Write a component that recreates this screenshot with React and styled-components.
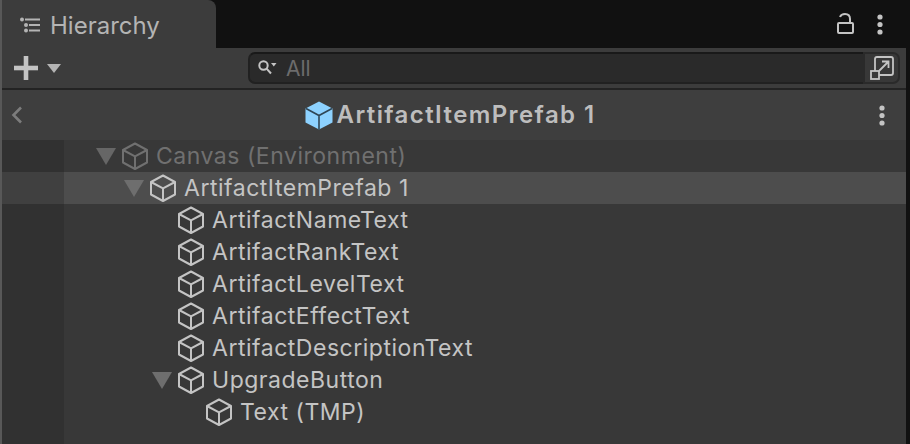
import styled, { createGlobalStyle } from "styled-components";

const GlobalStyle = createGlobalStyle`
  html, body {
    margin: 0;
    padding: 0;
    background: #111111;
  }
  * {
    box-sizing: border-box;
  }
`;

const items = [
  { name: "Canvas (Environment)", depth: 0, open: true, dim: true },
  { name: "ArtifactItemPrefab 1", depth: 1, open: true, selected: true },
  { name: "ArtifactNameText", depth: 2 },
  { name: "ArtifactRankText", depth: 2 },
  { name: "ArtifactLevelText", depth: 2 },
  { name: "ArtifactEffectText", depth: 2 },
  { name: "ArtifactDescriptionText", depth: 2 },
  { name: "UpgradeButton", depth: 2, open: true },
  { name: "Text (TMP)", depth: 3 },
];

const ListIcon = () => (
  <svg width="20" height="16" viewBox="0 0 20 16" fill="#b4b4b4">
    <circle cx="2" cy="2.5" r="2" />
    <circle cx="6" cy="8" r="2" />
    <circle cx="6" cy="13.5" r="2" />
    <rect x="5" y="1.5" width="15" height="2" />
    <rect x="9" y="7" width="11" height="2" />
    <rect x="9" y="12.5" width="11" height="2" />
  </svg>
);

const LockIcon = () => (
  <svg width="18" height="22" viewBox="0 0 18 22" fill="none" stroke="#c4c4c4" strokeWidth="2">
    <path d="M3 4 C4 1.5 6 1 8 1 C11 1 13 3 13 6 V10" />
    <rect x="1" y="10" width="15" height="10" rx="1" />
  </svg>
);

const DotsIcon = () => (
  <svg width="6" height="21" viewBox="0 0 6 21" fill="#c4c4c4">
    <circle cx="3" cy="3" r="2.6" />
    <circle cx="3" cy="10.5" r="2.6" />
    <circle cx="3" cy="18" r="2.6" />
  </svg>
);

const PlusIcon = () => (
  <svg width="24" height="24" viewBox="0 0 24 24" fill="#c4c4c4">
    <rect x="9.7" y="0" width="4.6" height="24" />
    <rect x="0" y="9.7" width="24" height="4.6" />
  </svg>
);

const SearchIcon = () => (
  <svg width="20" height="16" viewBox="0 0 20 16" fill="none" stroke="#c4c4c4" strokeWidth="2">
    <circle cx="5.5" cy="5.5" r="4.2" />
    <path d="M8.6 8.6 L13 13.5" />
    <path d="M13 3 H18.5 L15.8 6.4 Z" fill="#c4c4c4" stroke="none" />
  </svg>
);

const ExpandIcon = () => (
  <svg width="24" height="24" viewBox="0 0 24 24" fill="none" stroke="#c4c4c4" strokeWidth="1.8">
    <path d="M5 15 V3 Q5 1 7 1 H21 Q23 1 23 3 V17 Q23 19 21 19 H9" />
    <rect x="1" y="15" width="8" height="8" />
    <path d="M9 15 L18 6 M12 5.5 H18.5 V12" />
  </svg>
);

const CubeIcon = () => (
  <svg width="28" height="28" viewBox="0 0 28 28" fill="none" stroke="currentColor" strokeWidth="2" strokeLinejoin="round">
    <path d="M14 1.5 L26 8 V20.5 L14 27 L2 20.5 V8 Z" />
    <path d="M2 8 L14 14.4 L26 8 M14 14.4 V27" />
  </svg>
);

const BlueCube = () => (
  <svg width="28" height="29" viewBox="0 0 28 29">
    <path d="M14 0.5 L27.5 7.5 V21.5 L14 28.5 L0.5 21.5 V7.5 Z" fill="#8dd2ff" />
    <path d="M1 7.5 L14 14.5 L27 7.5 M14 14.5 V28.5" fill="none" stroke="#2f4656" strokeWidth="1.6" />
  </svg>
);

const BackIcon = () => (
  <svg width="12" height="18" viewBox="0 0 12 18" fill="none" stroke="#7c7c7c" strokeWidth="2.6">
    <path d="M10 1.5 L2.5 9 L10 16.5" />
  </svg>
);

const Window = styled.div`
  width: 910px;
  height: 444px;
  overflow: hidden;
  background: #111111;
  padding-right: 4px;
  font-family: Inter, "Noto Sans", sans-serif;
`;

const Frame = styled.div`
  height: 100%;
  display: flex;
  flex-direction: column;
  border-left: 2px solid #585858;
`;

const TopBar = styled.div`
  height: 48px;
  display: flex;
  align-items: stretch;
  justify-content: space-between;
  flex-shrink: 0;
`;

const Tab = styled.div`
  width: 214px;
  display: flex;
  align-items: center;
  gap: 10px;
  padding: 2px 0 0 18px;
  background: #3c3c3c;
  border-top-right-radius: 8px;
  color: #b4b4b4;
  font-size: 24px;
`;

const TopActions = styled.div`
  display: flex;
  align-items: center;
  gap: 22px;
  padding: 0 23px 0 0;
`;

const Toolbar = styled.div`
  height: 42px;
  flex-shrink: 0;
  display: flex;
  align-items: center;
  padding: 0 6px 0 12px;
  background: #3c3c3c;
  border-bottom: 2px solid #232323;
`;

const AddButton = styled.div`
  width: 234px;
  display: flex;
  align-items: center;
  gap: 9px;
`;

const Caret = styled.span`
  display: block;
  flex-shrink: 0;
  width: 0;
  height: 0;
  border-left: ${(p) => p.$width / 2}px solid transparent;
  border-right: ${(p) => p.$width / 2}px solid transparent;
  border-top: ${(p) => p.$height}px solid ${(p) => p.$color};
`;

const SearchField = styled.div`
  flex: 1;
  height: 32px;
  display: flex;
  align-items: center;
  gap: 8px;
  padding-left: 8px;
  background: #2a2a2a;
  border-top: 2px solid #191919;
  border-bottom: 2px solid #212121;
  border-left: 2px solid #212121;
  border-radius: 7px 0 0 7px;
  color: #6c6c6c;
  font-size: 21px;
`;

const SearchButton = styled.div`
  width: 37px;
  height: 32px;
  display: flex;
  align-items: center;
  justify-content: center;
  background: #383838;
  border: 2px solid #2a2a2a;
  border-radius: 0 7px 7px 0;
`;

const Breadcrumb = styled.div`
  height: 50px;
  flex-shrink: 0;
  display: flex;
  align-items: center;
  justify-content: space-between;
  padding: 0 21px 0 9px;
  background: #3e3e3e;
`;

const PrefabTitle = styled.div`
  display: flex;
  align-items: center;
  gap: 4px;
  margin-left: -2px;
  color: #bdbdbd;
  font-size: 24px;
  font-weight: 600;
  letter-spacing: 1.4px;
`;

const PrefabName = styled.span`
  padding-bottom: 2px;
`;

const Tree = styled.div`
  flex: 1;
  background: linear-gradient(to right, #313131 62px, #383838 62px);
`;

const Row = styled.div`
  height: 32px;
  display: flex;
  align-items: center;
  padding-left: ${(p) => 94 + p.$depth * 28}px;
  background: ${(p) =>
    p.$selected ? "linear-gradient(to right, #404040 62px, #4d4d4d 62px)" : "transparent"};
  color: ${(p) => (p.$dim ? "#707070" : "#c4c4c4")};
  font-size: 23px;
  letter-spacing: 0.52px;
  white-space: nowrap;
`;

const RowLabel = styled.span`
  padding-bottom: 1px;
`;

const ArrowSlot = styled.span`
  width: 25px;
  display: flex;
  align-items: center;
  flex-shrink: 0;
`;

const RowIcon = styled.span`
  display: flex;
  width: 28px;
  margin-right: 7px;
`;

const TreeRow = ({ item }) => (
  <Row $depth={item.depth} $selected={item.selected} $dim={item.dim}>
    <ArrowSlot>
      {item.open && <Caret $width={20} $height={17} $color={item.dim ? "#666666" : "#6e6e6e"} />}
    </ArrowSlot>
    <RowIcon>
      <CubeIcon />
    </RowIcon>
    <RowLabel>{item.name}</RowLabel>
  </Row>
);

const App = () => {
  return (
    <>
      <GlobalStyle />
      <Window>
        <Frame>
          <TopBar>
            <Tab>
              <ListIcon />
              Hierarchy
            </Tab>
            <TopActions>
              <LockIcon />
              <DotsIcon />
            </TopActions>
          </TopBar>
          <Toolbar>
            <AddButton>
              <PlusIcon />
              <Caret $width={15} $height={9} $color="#b4b4b4" />
            </AddButton>
            <SearchField>
              <SearchIcon />
              All
            </SearchField>
            <SearchButton>
              <ExpandIcon />
            </SearchButton>
          </Toolbar>
          <Breadcrumb>
            <BackIcon />
            <PrefabTitle>
              <BlueCube />
              <PrefabName>ArtifactItemPrefab 1</PrefabName>
            </PrefabTitle>
            <DotsIcon />
          </Breadcrumb>
          <Tree>
            {items.map((item) => (
              <TreeRow key={item.name} item={item} />
            ))}
          </Tree>
        </Frame>
      </Window>
    </>
  );
};

export default App;
